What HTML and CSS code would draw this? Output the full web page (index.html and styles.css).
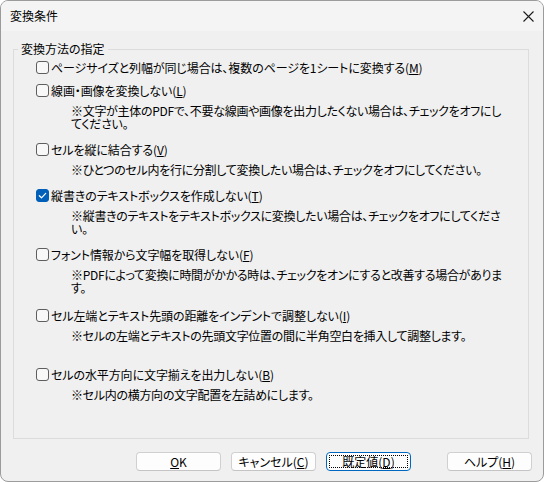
FILE: index.html
```html
<!DOCTYPE html>
<html lang="ja">
<head>
<meta charset="utf-8">
<title>変換条件</title>
<link rel="stylesheet" href="styles.css">
</head>
<body>
<div class="window">
  <div class="titlebar">
    <span class="title">変換条件</span>
    <svg class="close" width="11" height="11" viewBox="0 0 11 11"><path d="M0.5 0.5 L10.5 10.5 M10.5 0.5 L0.5 10.5" stroke="#1b1b1b" stroke-width="1.1" fill="none"/></svg>
  </div>
  <fieldset class="group">
    <legend class="group-title">変換方法の指定</legend>
    <div class="option option-plain">
      <label class="check-row"><span class="box"></span><span class="label">ページサイズと列幅が同じ場合は、複数のページを1シートに変換する(<u>M</u>)</span></label>
    </div>
    <div class="option">
      <label class="check-row"><span class="box"></span><span class="label">線画・画像を変換しない(<u>L</u>)</span></label>
      <p class="note">※文字が主体のPDFで、不要な線画や画像を出力したくない場合は、チェックをオフにし<br>てください。</p>
    </div>
    <div class="option">
      <label class="check-row"><span class="box"></span><span class="label">セルを縦に結合する(<u>V</u>)</span></label>
      <p class="note">※ひとつのセル内を行に分割して変換したい場合は、チェックをオフにしてください。</p>
    </div>
    <div class="option">
      <label class="check-row"><span class="box box-checked"><svg width="13" height="13" viewBox="0 0 13 13"><path d="M3.3 6.7 L5.5 8.8 L9.7 4.4" stroke="#fff" stroke-width="1.2" fill="none" stroke-linecap="round" stroke-linejoin="round"/></svg></span><span class="label">縦書きのテキストボックスを作成しない(<u>T</u>)</span></label>
      <p class="note">※縦書きのテキストをテキストボックスに変換したい場合は、チェックをオフにしてくださ<br>い。</p>
    </div>
    <div class="option option-wide">
      <label class="check-row"><span class="box"></span><span class="label">フォント情報から文字幅を取得しない(<u>F</u>)</span></label>
      <p class="note">※PDFによって変換に時間がかかる時は、チェックをオンにすると改善する場合がありま<br>す。</p>
    </div>
    <div class="option">
      <label class="check-row"><span class="box"></span><span class="label">セル左端とテキスト先頭の距離をインデントで調整しない(<u>I</u>)</span></label>
      <p class="note">※セルの左端とテキストの先頭文字位置の間に半角空白を挿入して調整します。</p>
    </div>
    <div class="option option-spaced">
      <label class="check-row"><span class="box"></span><span class="label">セルの水平方向に文字揃えを出力しない(<u>B</u>)</span></label>
      <p class="note">※セル内の横方向の文字配置を左詰めにします。</p>
    </div>
  </fieldset>
  <div class="footer">
    <button class="btn" type="button"><u>O</u>K</button>
    <button class="btn" type="button">キャンセル(<u>C</u>)</button>
    <button class="btn btn-default" type="button">既定値(<u>D</u>)</button>
    <button class="btn btn-help" type="button">ヘルプ(<u>H</u>)</button>
  </div>
</div>
</body>
</html>
```
FILE: styles.css
```css
html, body {
  margin: 0;
  padding: 0;
  background: #ffffff;
}

body {
  font-family: "Noto Sans CJK JP", "Noto Sans", sans-serif;
  font-size: 12px;
  color: #000;
  font-feature-settings: "palt";
}

.window {
  box-sizing: border-box;
  width: 544px;
  height: 482px;
  border: 1px solid #9b9b9b;
  border-radius: 8px;
  background: #f0f0f0;
  overflow: hidden;
  display: flex;
  flex-direction: column;
}

.titlebar {
  height: 30px;
  flex: none;
  background: #f4f4f4;
  display: flex;
  align-items: center;
  justify-content: space-between;
  padding: 0 9px 0 9px;
}

.title {
  font-size: 12px;
  line-height: 14px;
}

.close {
  display: block;
}

.group {
  flex: 1;
  margin: 11px 14px 0 12px;
  padding: 5px 0 0 0;
  border: 1px solid #dcdcdc;
  min-width: 0;
}

.group-title {
  margin-left: 4px;
  padding: 0 3px;
  line-height: 14px;
}

.option {
  margin: 0 0 13px 22px;
}

.option-plain {
  margin-bottom: 10px;
}

.option-wide {
  margin-bottom: 15px;
}

.option-spaced {
  margin-top: 26px;
}

.check-row {
  display: flex;
  align-items: center;
  height: 13px;
  line-height: 13px;
  white-space: nowrap;
  letter-spacing: -0.1px;
}

.box {
  box-sizing: border-box;
  width: 13px;
  height: 13px;
  flex: none;
  border: 1px solid #5e5e5e;
  border-radius: 3px;
  background: #f8f8f8;
  margin-right: 2px;
  display: flex;
}

.box-checked {
  border-color: #005fb8;
  background: #005fb8;
}

.box-checked svg {
  margin: -1px;
}

.note {
  margin: 7px 0 0 35px;
  line-height: 13px;
  white-space: nowrap;
  letter-spacing: -0.3px;
}

u {
  text-decoration: underline;
  text-underline-offset: 1px;
}

.footer {
  flex: none;
  display: flex;
  justify-content: flex-end;
  gap: 10px;
  padding: 13px 11px 10px 0;
}

.btn {
  box-sizing: border-box;
  width: 85px;
  height: 19px;
  padding: 0;
  border: 1px solid #d0d0d0;
  border-bottom-color: #c4c4c4;
  border-radius: 4px;
  background: #fdfdfd;
  font-family: inherit;
  font-size: 12px;
  font-feature-settings: "palt";
  line-height: 15px;
  color: #000;
}

.btn-default {
  border-color: #0067c0;
  outline: 1px dotted #000;
  outline-offset: -4px;
}

.btn-help {
  margin-left: 26px;
}
```
